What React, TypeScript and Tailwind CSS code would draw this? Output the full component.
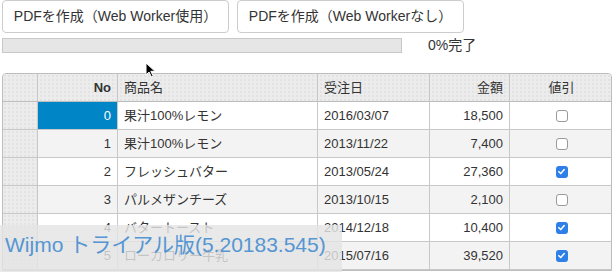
import React from "react";

const rows = [
  { no: 0, name: "果汁100%レモン", date: "2016/03/07", amount: "18,500", discount: false },
  { no: 1, name: "果汁100%レモン", date: "2013/11/22", amount: "7,400", discount: false },
  { no: 2, name: "フレッシュバター", date: "2013/05/24", amount: "27,360", discount: true },
  { no: 3, name: "パルメザンチーズ", date: "2013/10/15", amount: "2,100", discount: false },
  { no: 4, name: "バタートースト", date: "2014/12/18", amount: "10,400", discount: true },
  { no: 5, name: "ローカロリー牛乳", date: "2015/07/16", amount: "39,520", discount: true },
];

const cols = "grid grid-cols-[35px_80px_200px_112px_80px_103px]";
const dots = "bg-[#ececec] bg-[radial-gradient(#d6d6d6_0.6px,transparent_0.8px)] bg-[length:4px_4px]";

function Check({ on }: { on: boolean }) {
  if (on) {
    return (
      <span className="flex h-[12px] w-[12px] items-center justify-center rounded-[3px] bg-[#2f7fe8]">
        <svg width="9" height="9" viewBox="0 0 10 10">
          <path d="M2 5.2 L4.2 7.3 L8 2.8" fill="none" stroke="white" strokeWidth="1.7" strokeLinecap="round" strokeLinejoin="round" />
        </svg>
      </span>
    );
  }
  return <span className="block h-[12px] w-[12px] rounded-[3px] border border-[#9a9a9a] bg-white" />;
}

export default function App() {
  return (
    <div className="relative h-[272px] w-[616px] overflow-hidden bg-white font-['Liberation_Sans','Noto_Sans_CJK_JP',sans-serif] text-[#333]">
      <div className="flex gap-2 pl-[2px]">
        <button className="h-[33px] w-[227px] rounded-[4px] border border-[#ccc] bg-white text-[14px] text-[#333]">
          PDFを作成（Web Worker使用）
        </button>
        <button className="h-[33px] w-[227px] rounded-[4px] border border-[#ccc] bg-white text-[14px] text-[#333]">
          PDFを作成（Web Workerなし）
        </button>
      </div>

      <div className="mt-[4px] flex h-[16px] items-center pl-[2px]">
        <div className="h-[15px] w-[400px] border border-[#c8c8c8] bg-[#e6e6e6]" />
        <span className="ml-[26px] text-[14px] leading-[16px] text-[#333]">0%完了</span>
      </div>

      <div className="ml-[2px] mt-[20px] w-[610px] overflow-hidden rounded-t-[4px] border border-[#bdbdbd] text-[13px]">
        <div className={`${cols} h-[28px] border-b border-[#bdbdbd] ${dots}`}>
          <div className="border-r border-[#c8c8c8]" />
          <div className="flex items-center justify-end border-r border-[#c8c8c8] px-[6px] font-bold">No</div>
          <div className="flex items-center border-r border-[#c8c8c8] px-[6px]">商品名</div>
          <div className="flex items-center border-r border-[#c8c8c8] px-[6px]">受注日</div>
          <div className="flex items-center justify-end border-r border-[#c8c8c8] px-[6px]">金額</div>
          <div className="flex items-center justify-center">値引</div>
        </div>
        {rows.map((r) => (
          <div
            key={r.no}
            className={`${cols} h-[28px] border-b border-[#c8c8c8] ${r.no % 2 ? "bg-[#f3f3f3]" : "bg-white"}`}
          >
            <div className={`border-r border-[#c8c8c8] ${dots}`} />
            <div
              className={`flex items-center justify-end border-r border-[#c8c8c8] px-[6px] ${
                r.no === 0 ? "bg-[#0085c7] text-white" : ""
              }`}
            >
              {r.no}
            </div>
            <div className="flex items-center border-r border-[#c8c8c8] px-[6px]">{r.name}</div>
            <div className="flex items-center border-r border-[#c8c8c8] px-[6px]">{r.date}</div>
            <div className="flex items-center justify-end border-r border-[#c8c8c8] px-[6px]">{r.amount}</div>
            <div className="flex items-center justify-center">
              <Check on={r.discount} />
            </div>
          </div>
        ))}
      </div>

      {/* trial watermark */}
      <div className="absolute left-0 top-[225px] flex h-[47px] w-[342px] items-start bg-[rgba(228,228,228,0.82)] pl-[5px] pt-[7px]">
        <span className="text-[21px] leading-[25px] text-[#5596d3]">Wijmo トライアル版(5.20183.545)</span>
      </div>

      {/* mouse cursor */}
      <svg className="absolute left-[145px] top-[62px]" width="12" height="16" viewBox="0 0 12 16">
        <path d="M1 1 L1 13 L4 10 L6.5 15 L8.3 14.2 L5.8 9.3 L10 9.3 Z" fill="black" stroke="white" strokeWidth="1" />
      </svg>
    </div>
  );
}
